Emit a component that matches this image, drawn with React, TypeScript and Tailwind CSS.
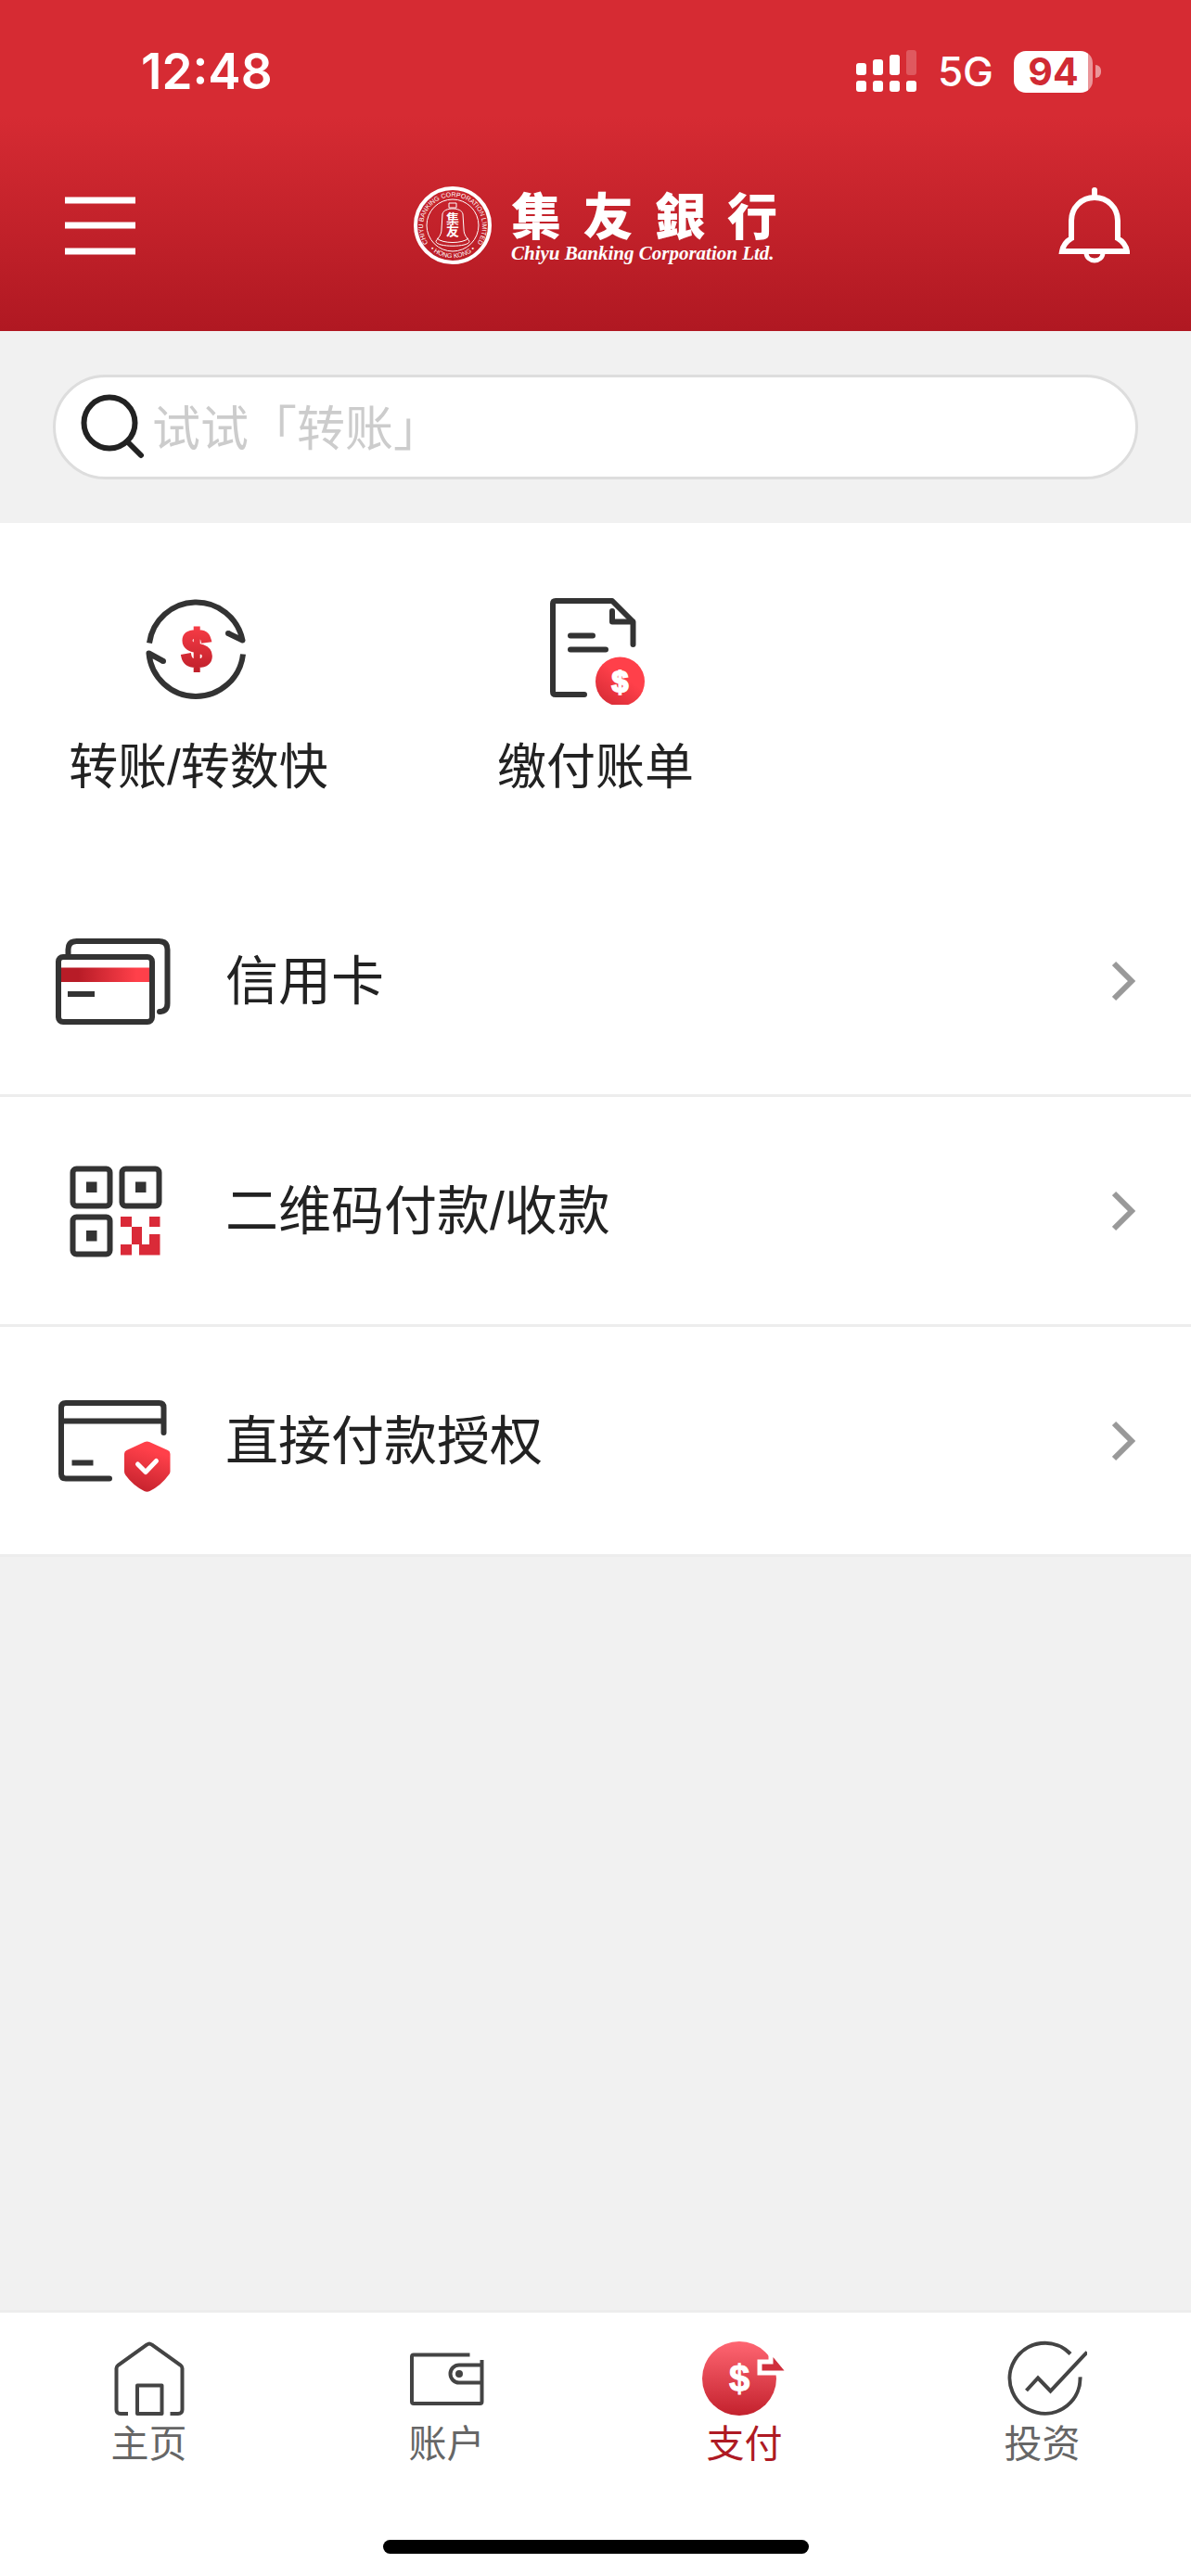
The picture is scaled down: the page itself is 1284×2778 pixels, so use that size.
import { useState } from "react";
import type { ReactNode } from "react";

type MenuItem = {
  id: string;
  label: string;
  icon: ReactNode;
};

const LINE = "#333333";

const RedGradient = ({ id, x2 = 0, y2 = 1 }: { id: string; x2?: number; y2?: number }) => (
  <defs>
    <linearGradient id={id} x1="0" y1="0" x2={x2} y2={y2}>
      <stop offset="0" stopColor="#ff404a" />
      <stop offset="1" stopColor="#b81c27" />
    </linearGradient>
  </defs>
);

const Dollar = ({ x, y, size, fill, weight }: { x: number; y: number; size: number; fill: string; weight: number }) => (
  <text
    x={x}
    y={y}
    textAnchor="middle"
    fontSize={size}
    fontWeight="700"
    fontFamily="'Liberation Sans', sans-serif"
    fill={fill}
    stroke={fill}
    strokeWidth={weight}
  >
    $
  </text>
);

const SignalIcon = () => (
  <svg width="66" height="46" viewBox="0 0 66 46" fill="#fff" aria-hidden="true">
    <rect x="0" y="14" width="11" height="13" rx="3" />
    <rect x="18" y="10" width="11" height="17" rx="3" />
    <rect x="36" y="5" width="11" height="22" rx="3" />
    <rect x="54" y="0" width="11" height="27" rx="3" opacity="0.22" />
    <rect x="0" y="33" width="11" height="12" rx="3" />
    <rect x="18" y="33" width="11" height="12" rx="3" />
    <rect x="36" y="33" width="11" height="12" rx="3" />
    <rect x="54" y="33" width="11" height="12" rx="3" />
  </svg>
);

const Battery = () => (
  <div className="flex items-center gap-[3px]">
    <div className="flex h-[45px] w-[85px] items-center justify-center rounded-[13px] bg-linear-to-r from-white from-94% to-white/50 to-94% text-[41px] leading-none font-bold text-[#d02a33]">
      94
    </div>
    <div className="h-[14px] w-[6px] rounded-r-full bg-white/50" />
  </div>
);

const SealIcon = () => (
  <svg width="84" height="84" viewBox="0 0 84 84" fill="none" stroke="#fff" aria-hidden="true">
    <circle cx="42" cy="42" r="40" strokeWidth="4" />
    <circle cx="42" cy="42" r="28" strokeWidth="1" />
    <path d="M38 18h8v5h-8zM31 30c1-8 21-8 22 0l1 16c0 6 3 9 6 13 1 7-37 7-36 0 3-4 6-7 6-13zM25 56c6 6 28 6 34 0" strokeWidth="1" />
    <path id="seal-top" d="M17 63A32 32 0 1 1 67 63" stroke="none" />
    <path id="seal-bottom" d="M17 67A36 36 0 0 0 67 67" stroke="none" />
    <g fill="#fff" stroke="none" fontFamily="'Liberation Sans', sans-serif">
      <text fontSize="7">
        <textPath href="#seal-top" startOffset="50%" textAnchor="middle">
          CHIYU BANKING CORPORATION LIMITED
        </textPath>
      </text>
      <text fontSize="7">
        <textPath href="#seal-bottom" startOffset="50%" textAnchor="middle">
          • HONG KONG •
        </textPath>
      </text>
    </g>
    <g fill="#fff" stroke="none" textAnchor="middle" fontWeight="700" fontFamily="'Noto Sans CJK TC', sans-serif">
      <text x="42" y="40" fontSize="14">集</text>
      <text x="42" y="53" fontSize="14">友</text>
    </g>
  </svg>
);

const BellIcon = () => (
  <svg width="80" height="90" viewBox="0 0 80 90" fill="none" stroke="#fff" strokeWidth="6" aria-hidden="true">
    <path d="M42 7v8" strokeLinecap="round" />
    <path d="M42 15C28 15 17 26 17 40v19c-5 3-9 8-10 14h70c-1-6-5-11-10-14V40c0-14-11-25-25-25z" />
    <path d="M33 74c0 12 18 12 18 0" strokeWidth="5" />
  </svg>
);

const MenuIcon = () => (
  <svg width="80" height="90" viewBox="0 0 80 90" stroke="#fff" strokeWidth="7" aria-hidden="true">
    <path d="M4 18h76M4 45h76M4 73h76" />
  </svg>
);

const SearchIcon = () => (
  <svg width="72" height="72" viewBox="0 0 72 72" fill="none" stroke="#222" strokeWidth="6" strokeLinecap="round" className="shrink-0" aria-hidden="true">
    <circle cx="34" cy="31" r="27.5" />
    <path d="M53 51l15 15" />
  </svg>
);

const TransferIcon = () => (
  <svg width="120" height="120" viewBox="0 0 120 120" fill="none" aria-hidden="true">
    <RedGradient id="transfer-red" />
    <g stroke={LINE} strokeWidth="6" strokeLinejoin="round">
      <path d="M7 53.5A51 51 0 0 1 107.5 50.5L92 43" />
      <path d="M108 65.5A51 51 0 0 1 6.5 64.5L22 73" />
    </g>
    <circle cx="92" cy="43" r="3" fill={LINE} />
    <circle cx="22" cy="73" r="3" fill={LINE} />
    <Dollar x={58} y={79} size={56} fill="url(#transfer-red)" weight={4} />
  </svg>
);

const BillIcon = () => (
  <svg width="120" height="120" viewBox="0 0 120 120" fill="none" aria-hidden="true">
    <RedGradient id="bill-red" x2={-0.7} />
    <g stroke={LINE} strokeWidth="6" strokeLinecap="round" strokeLinejoin="round">
      <path d="M100.5 55V30.5L78 8H17q-3 0-3 3v95q0 3 3 3h31" />
      <path d="M78 19v11.5h22" />
      <path d="M33 45.5h24M33 60.5h38" />
    </g>
    <circle cx="86.5" cy="95" r="26.5" fill="url(#bill-red)" />
    <Dollar x={86.5} y={106} size={32} fill="#fff" weight={2} />
  </svg>
);

const CreditCardIcon = () => (
  <svg width="130" height="130" viewBox="0 0 130 130" fill="none" aria-hidden="true">
    <defs>
      <linearGradient id="card-red">
        <stop offset="0.2" stopColor="#b81c27" />
        <stop offset="0.85" stopColor="#ff404a" />
      </linearGradient>
    </defs>
    <path d="M8 50.5h97v15.5H8z" fill="url(#card-red)" />
    <g stroke={LINE} strokeWidth="6">
      <rect x="6" y="39" width="101" height="70" rx="5" />
      <path d="M16.5 36v-5q0-9 9-9h89q9 0 9 9v58q0 9-9 9" />
      <path d="M16 79h29" />
    </g>
    <circle cx="115" cy="98" r="3" fill={LINE} />
  </svg>
);

const QrIcon = () => (
  <svg width="130" height="130" viewBox="0 0 130 130" fill="none" aria-hidden="true">
    <g stroke={LINE} strokeWidth="6">
      <rect x="21.5" y="19.5" width="40" height="40" rx="4" />
      <rect x="74.5" y="19.5" width="40" height="40" rx="4" />
      <rect x="21.5" y="71.5" width="40" height="40" rx="4" />
    </g>
    <path d="M36 33.5h11.5v11.5H36zM89 33.5h11.5v11.5H89zM36 86h11.5v11.5H36z" fill={LINE} />
    <path
      d="M73 71h12v11h11v19h-11v11.5H73V101h12V82H73zM104 71h11.5v11H104zM104 90h11.5v22.5H93V101h11z"
      fill="#da2a38"
    />
  </svg>
);

const AuthorizeIcon = () => (
  <svg width="130" height="130" viewBox="0 0 130 130" fill="none" aria-hidden="true">
    <RedGradient id="shield-red" x2={-0.3} />
    <g stroke={LINE} strokeWidth="6" strokeLinecap="round">
      <path d="M119.5 56V29q0-5-5-5H14q-5 0-5 5v71.5q0 5 5 5h47" />
      <path d="M9 43.5h110" />
    </g>
    <path d="M20.5 88.5h23" stroke={LINE} strokeWidth="6" />
    <path
      d="M99 66q2.5-1 5 0l20 9q2.5 1 2.5 4v19q0 2-2 4-8 11-20 17-3 1.500-6 0-12-6-20-17-1.500-2-1.500-4V79q0-3 2.500-4z"
      fill="url(#shield-red)"
    />
    <path d="M91.5 90l8.5 8.5 11.5-12" stroke="#fff" strokeWidth="5" strokeLinecap="round" strokeLinejoin="round" />
  </svg>
);

const ChevronIcon = () => (
  <svg width="26" height="44" viewBox="0 0 26 44" fill="none" stroke="#999" strokeWidth="6" aria-hidden="true">
    <path d="M2 3l19 19L2 41" />
  </svg>
);

const HomeIcon = () => (
  <svg width="96" height="96" viewBox="0 0 96 96" fill="none" stroke="#444" strokeWidth="4" aria-hidden="true">
    <path d="M25 86H17q-4.5 0-4.5-4.500V37q0-2 2-3.500l31-22q2.500-2 5 0l31 22q2 1.500 2 3.500v44.500q0 4.500-4.500 4.500h-8.500" />
    <path d="M35 86V55.500h26.500V86z" strokeLinejoin="round" />
  </svg>
);

const WalletIcon = () => (
  <svg width="96" height="96" viewBox="0 0 96 96" fill="none" stroke="#444" strokeWidth="4" aria-hidden="true">
    <path d="M72.5 22.5H12q-2 0-2 2V73q0 2 2 2h71.5q2 0 2-2V28" />
    <path d="M85.5 33.5H61a9.5 9.5 0 0 0 0 19h24.5" />
    <circle cx="61" cy="43" r="4" fill="#444" stroke="none" />
  </svg>
);

const PayIcon = () => (
  <svg width="96" height="96" viewBox="0 0 96 96" fill="none" aria-hidden="true">
    <defs>
      <linearGradient id="pay-red" x1="0" y1="0" x2="0" y2="1">
        <stop offset="0" stopColor="#ff6672" />
        <stop offset="1" stopColor="#c3212d" />
      </linearGradient>
    </defs>
    <circle cx="42" cy="48" r="40" fill="url(#pay-red)" />
    <path d="M66.5 32.5h12V25l12 14.5h-24z" fill="#d02f3c" stroke="#fff" strokeWidth="10" style={{ paintOrder: "stroke" }} />
    <Dollar x={42} y={62} size={40} fill="#fff" weight={1} />
  </svg>
);

const InvestIcon = () => (
  <svg width="96" height="96" viewBox="0 0 96 96" fill="none" stroke="#444" strokeWidth="4" aria-hidden="true">
    <path d="M78 21.5A38 38 0 1 0 88.5 46.3" />
    <path d="M30.5 61L43 47.5l13.5 14L96 19.5" />
  </svg>
);

const quickActions: MenuItem[] = [
  { id: "transfer", label: "转账/转数快", icon: <TransferIcon /> },
  { id: "bill", label: "缴付账单", icon: <BillIcon /> },
];

const services: MenuItem[] = [
  { id: "card", label: "信用卡", icon: <CreditCardIcon /> },
  { id: "qr", label: "二维码付款/收款", icon: <QrIcon /> },
  { id: "authorize", label: "直接付款授权", icon: <AuthorizeIcon /> },
];

const tabs: MenuItem[] = [
  { id: "home", label: "主页", icon: <HomeIcon /> },
  { id: "account", label: "账户", icon: <WalletIcon /> },
  { id: "pay", label: "支付", icon: <PayIcon /> },
  { id: "invest", label: "投资", icon: <InvestIcon /> },
];

const Header = () => (
  <header className="bg-linear-to-b from-[#d62b33] from-35% to-[#b01822] pb-[25px] text-white">
    <div className="flex h-[154px] items-center justify-between pr-[97px] pl-[152px] font-['Inter',sans-serif]">
      <span className="text-[53px] leading-none font-semibold">12:48</span>
      <div className="flex items-center gap-[22px]">
        <SignalIcon />
        <span className="text-[44px] leading-none font-medium">5G</span>
        <Battery />
      </div>
    </div>
    <div className="flex h-[178px] items-center justify-between px-[66px]">
      <button type="button" aria-label="菜单">
        <MenuIcon />
      </button>
      <div className="flex items-center gap-[21px]">
        <SealIcon />
        <div className="flex w-[287px] flex-col">
          <div className="flex justify-between font-['Noto_Sans_CJK_TC',sans-serif] text-[54px] leading-[60px] font-black">
            <span>集</span>
            <span>友</span>
            <span>銀</span>
            <span>行</span>
          </div>
          <span className="font-['Liberation_Serif',serif] text-[21px] leading-[24px] font-bold whitespace-nowrap italic">
            Chiyu Banking Corporation Ltd.
          </span>
        </div>
      </div>
      <button type="button" aria-label="通知">
        <BellIcon />
      </button>
    </div>
  </header>
);

const App = () => {
  const [search, setSearch] = useState("");
  const [activeTab, setActiveTab] = useState("pay");

  return (
    <div className="flex min-h-screen w-full flex-col bg-[#f1f1f1] font-['Liberation_Sans','Noto_Sans_CJK_SC',sans-serif] text-[#222]">
      <Header />
      <main className="flex-1">
        <div className="px-[57px] py-[47px]">
          <label className="flex h-[113px] items-center gap-2 rounded-full border-3 border-[#ddd] bg-white px-6">
            <SearchIcon />
            <input
              type="text"
              aria-label="搜索"
              placeholder="试试「转账」"
              value={search}
              onChange={(e) => setSearch(e.target.value)}
              className="w-full pb-1 font-['Noto_Sans_CJK_SC',sans-serif] text-[52px] leading-[72px] outline-none placeholder:text-[#ccc]"
            />
          </label>
        </div>
        <div className="bg-white pt-[76px]">
          <div className="grid grid-cols-3 pb-[68px]">
            {quickActions.map((item) => (
              <button key={item.id} type="button" className="flex flex-col items-center gap-[29px]">
                {item.icon}
                <span className="text-[53px] leading-[78px]">{item.label}</span>
              </button>
            ))}
          </div>
          <ul>
            {services.map((item) => (
              <li key={item.id} className="border-b-3 border-[#ededed]">
                <button type="button" className="flex h-[245px] w-full items-center pr-[59px] pl-[57px]">
                  {item.icon}
                  <span className="flex-1 pl-14 text-left text-[57px] leading-[80px]">{item.label}</span>
                  <ChevronIcon />
                </button>
              </li>
            ))}
          </ul>
        </div>
      </main>
      <nav className="border-t-3 border-[#ededed] bg-white pt-[23px] pb-6">
        <div className="grid grid-cols-4">
          {tabs.map((tab) => (
            <button
              key={tab.id}
              type="button"
              onClick={() => setActiveTab(tab.id)}
              className={`flex flex-col items-center text-[41px] leading-[46px] ${
                activeTab === tab.id ? "text-[#ae1a24]" : "text-[#666]"
              }`}
            >
              {tab.icon}
              {tab.label}
            </button>
          ))}
        </div>
        <div className="mx-auto mt-20 h-[15px] w-[459px] rounded-full bg-black" />
      </nav>
    </div>
  );
};

export default App;
